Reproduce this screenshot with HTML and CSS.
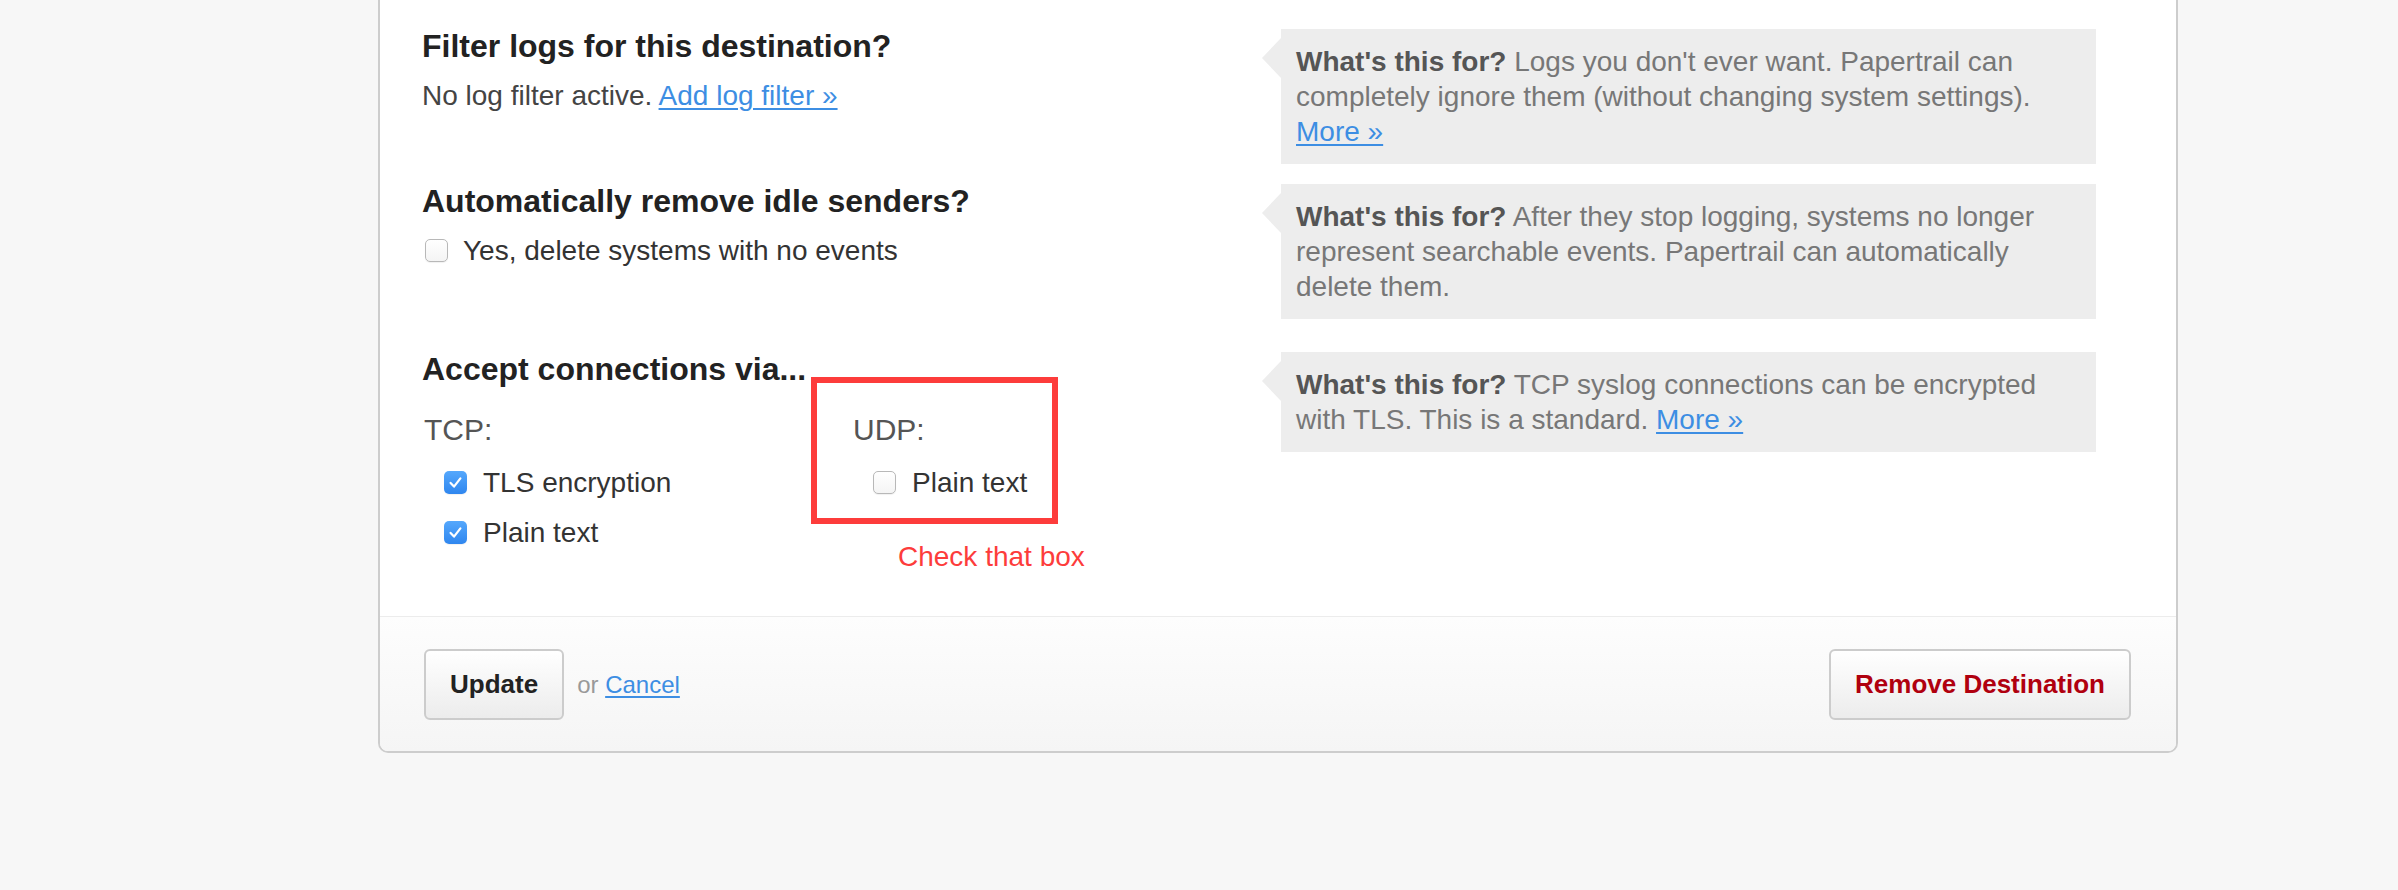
FILE: index.html
```html
<!DOCTYPE html>
<html>
<head>
<meta charset="utf-8">
<title>Destination settings</title>
<link rel="stylesheet" href="styles.css">
</head>
<body>
<div class="page">
  <div class="card">
    <div class="form-body">
      <section class="row row-1">
        <div class="row-main">
          <h2 class="q">Filter logs for this destination?</h2>
          <p class="text">No log filter active. <a href="#" class="link">Add log filter »</a></p>
        </div>
        <aside class="help"><b>What's this for?</b> Logs you don't ever want. Papertrail can completely ignore them (without changing system settings). <a href="#" class="link">More »</a></aside>
      </section>

      <section class="row row-2">
        <div class="row-main">
          <h2 class="q">Automatically remove idle senders?</h2>
          <label class="opt opt-idle"><span class="cb"></span><span>Yes, delete systems with no events</span></label>
        </div>
        <aside class="help"><b>What's this for?</b> After they stop logging, systems no longer represent searchable events. Papertrail can automatically delete them.</aside>
      </section>

      <section class="row row-3">
        <div class="row-main">
          <h2 class="q">Accept connections via...</h2>
          <div class="protocols">
            <div class="proto proto-tcp">
              <div class="proto-label">TCP:</div>
              <div class="opts">
                <label class="opt"><span class="cb cb-on"><svg viewBox="0 0 23 23" width="23" height="23"><path d="M6.6 11.9 L10 15.6 L16.4 7.4" fill="none" stroke="#fff" stroke-width="2.2" stroke-linecap="round" stroke-linejoin="round"/></svg></span><span>TLS encryption</span></label>
                <label class="opt"><span class="cb cb-on"><svg viewBox="0 0 23 23" width="23" height="23"><path d="M6.6 11.9 L10 15.6 L16.4 7.4" fill="none" stroke="#fff" stroke-width="2.2" stroke-linecap="round" stroke-linejoin="round"/></svg></span><span>Plain text</span></label>
              </div>
            </div>
            <div class="proto proto-udp">
              <div class="proto-label">UDP:</div>
              <div class="opts">
                <label class="opt"><span class="cb"></span><span>Plain text</span></label>
              </div>
              <div class="annot-frame"></div>
              <div class="annot-caption">Check that box</div>
            </div>
          </div>
        </div>
        <aside class="help"><b>What's this for?</b> TCP syslog connections can be encrypted with TLS. This is a standard. <a href="#" class="link">More »</a></aside>
      </section>
    </div>

    <div class="footer">
      <div class="footer-left">
        <button class="btn">Update</button>
        <span class="or">or <a href="#" class="link">Cancel</a></span>
      </div>
      <button class="btn btn-danger">Remove Destination</button>
    </div>
  </div>
</div>
</body>
</html>
```

FILE: styles.css
```css
html, body {
  margin: 0;
  padding: 0;
}
body {
  background: #f7f7f7;
  font-family: "Liberation Sans", Arial, Helvetica, sans-serif;
  color: #444;
}
.page {
  padding-left: 378px;
}
.card {
  width: 1800px;
  box-sizing: border-box;
  background: #fff;
  border: 2px solid #cdcdcd;
  border-top: 0;
  border-radius: 0 0 10px 10px;
  overflow: hidden;
}
.form-body {
  padding: 27px 80px 66px 42px;
}
.row {
  display: flex;
  align-items: flex-start;
}
.row-1 { margin-bottom: 18px; }
.row-2 { margin-bottom: 31px; }
.row-main {
  flex: 1;
  min-width: 0;
}
.q {
  margin: 0 0 13px;
  font-size: 32px;
  line-height: 38px;
  font-weight: bold;
  color: #222;
}
.text {
  margin: 0;
  font-size: 28px;
  line-height: 35px;
  color: #444;
}
.link {
  color: #3d8ee3;
  text-decoration: underline;
  text-underline-offset: 3px;
  text-decoration-thickness: 2px;
}
.help {
  position: relative;
  flex: none;
  width: 815px;
  box-sizing: border-box;
  margin-top: 2px;
  padding: 15px 22px 15px 15px;
  background: #ededed;
  font-size: 28px;
  line-height: 35px;
  color: #777;
}
.help b {
  color: #555;
}
.help::before {
  content: "";
  position: absolute;
  left: -19px;
  top: 9px;
  border-right: 19px solid #ededed;
  border-top: 20px solid transparent;
  border-bottom: 20px solid transparent;
}
.opt {
  display: flex;
  align-items: center;
  height: 35px;
  font-size: 28px;
  color: #333;
}
.opt-idle {
  padding-left: 3px;
}
.opt-idle .cb {
  margin-right: 15px;
}
.cb {
  flex: none;
  width: 23px;
  height: 23px;
  box-sizing: border-box;
  margin-right: 16px;
  border: 1.5px solid #b8b8b8;
  border-radius: 5px;
  background: linear-gradient(#fff, #f4f4f4);
  box-shadow: 0 1px 1px rgba(0,0,0,0.06);
}
.cb-on {
  border: 0;
  background: linear-gradient(#55a8fc, #2f86ef);
}
.cb svg {
  display: block;
}
.protocols {
  display: flex;
  margin-top: 24px;
  padding-left: 2px;
}
.proto {
  position: relative;
}
.proto-tcp {
  width: 429px;
}
.proto-label {
  font-size: 30px;
  line-height: 36px;
  color: #555;
}
.opts {
  margin-top: 17px;
  padding-left: 20px;
  display: flex;
  flex-direction: column;
  gap: 15px;
}
.annot-frame {
  position: absolute;
  left: -42px;
  top: -35px;
  width: 247px;
  height: 147px;
  box-sizing: border-box;
  border: 6px solid #fd3c3b;
}
.annot-caption {
  position: absolute;
  left: 45px;
  top: 127px;
  white-space: nowrap;
  font-size: 28px;
  line-height: 35px;
  color: #fd3c3b;
}
.footer {
  display: flex;
  justify-content: space-between;
  align-items: center;
  padding: 32px 45px 31px 44px;
  border-top: 1px solid #ececec;
  background: linear-gradient(#fdfdfd, #f5f5f5);
}
.footer-left {
  display: flex;
  align-items: center;
}
.btn {
  height: 71px;
  padding: 0 24px;
  border: 2px solid #cccccc;
  border-radius: 6px;
  background: linear-gradient(#ffffff, #ececec);
  font-family: "Liberation Sans", Arial, Helvetica, sans-serif;
  font-size: 26px;
  font-weight: bold;
  color: #222;
}
.btn-danger {
  color: #b0000f;
}
.or {
  margin-left: 13px;
  font-size: 24px;
  color: #999;
}
```
